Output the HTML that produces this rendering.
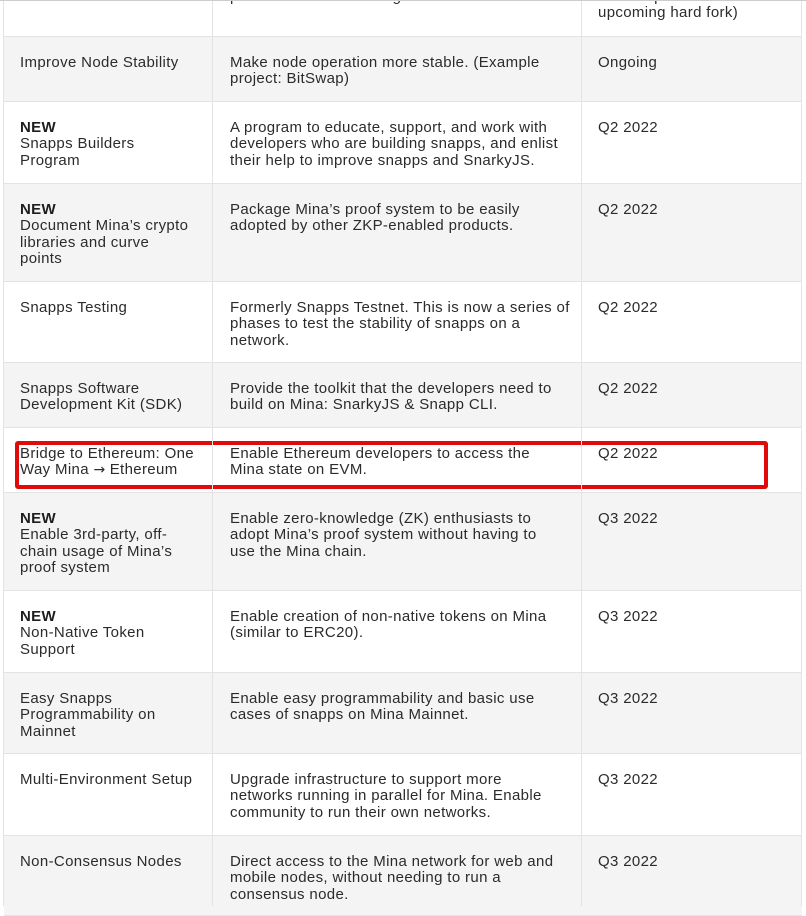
<!DOCTYPE html>
<html><head><meta charset="utf-8"><style>
body{margin:0;width:806px;height:906px;overflow:hidden;background:#fff;font-family:"Liberation Sans",Arial,sans-serif;font-size:15px;letter-spacing:0.35px;line-height:16.3px;color:#2b2b2b;position:relative}
.r{position:absolute;left:4px;width:798px;border-bottom:1px solid #e3e3e3;box-sizing:border-box}
.g{background:#f4f4f4}
.c{position:absolute;top:18px;white-space:nowrap}
.c1{left:16px}.c2{left:226px}.c3{left:594px}
.vl{position:absolute;top:0;bottom:0;width:1px;background:#e3e3e3}
b{font-weight:bold;color:#1e1e1e}
.ar{font-family:"DejaVu Sans",sans-serif;font-size:14px;letter-spacing:0}
.box{position:absolute;left:15px;top:441px;width:753px;height:48px;border:4px solid #e00a0a;border-radius:3px;box-sizing:border-box}
</style></head><body>
<div class="vl" style="left:3px;z-index:2"></div>
<div class="vl" style="left:212px;z-index:2"></div>
<div class="vl" style="left:581px;z-index:2"></div>
<div class="vl" style="left:801px;z-index:2"></div>
<div style="position:absolute;left:0;top:0;width:806px;height:1px;background:#ccc;z-index:3"></div>

<div class="r" style="top:0;height:37px"><div class="c c1" style="top:-11px">Kimchi SNARK</div><div class="c c2" style="top:-11px">prover time than the original PLONK SNARK</div><div class="c c3" style="top:-11px">be incorporated in an<br>upcoming hard fork)</div></div>
<div class="r g" style="top:37px;height:65px"><div class="c c1">Improve Node Stability</div><div class="c c2">Make node operation more stable. (Example<br>project: BitSwap)</div><div class="c c3">Ongoing</div></div>
<div class="r" style="top:102px;height:82px"><div class="c c1"><b>NEW</b><br>Snapps Builders<br>Program</div><div class="c c2">A program to educate, support, and work with<br>developers who are building snapps, and enlist<br>their help to improve snapps and SnarkyJS.</div><div class="c c3">Q2 2022</div></div>
<div class="r g" style="top:184px;height:98px"><div class="c c1"><b>NEW</b><br>Document Mina’s crypto<br>libraries and curve<br>points</div><div class="c c2">Package Mina’s proof system to be easily<br>adopted by other ZKP-enabled products.</div><div class="c c3">Q2 2022</div></div>
<div class="r" style="top:282px;height:81px"><div class="c c1">Snapps Testing</div><div class="c c2">Formerly Snapps Testnet. This is now a series of<br>phases to test the stability of snapps on a<br>network.</div><div class="c c3">Q2 2022</div></div>
<div class="r g" style="top:363px;height:65px"><div class="c c1">Snapps Software<br>Development Kit (SDK)</div><div class="c c2">Provide the toolkit that the developers need to<br>build on Mina: SnarkyJS &amp; Snapp CLI.</div><div class="c c3">Q2 2022</div></div>
<div class="r" style="top:428px;height:65px"><div class="c c1">Bridge to Ethereum: One<br>Way Mina <span class="ar">→</span> Ethereum</div><div class="c c2">Enable Ethereum developers to access the<br>Mina state on EVM.</div><div class="c c3">Q2 2022</div></div>
<div class="r g" style="top:493px;height:98px"><div class="c c1"><b>NEW</b><br>Enable 3rd-party, off-<br>chain usage of Mina’s<br>proof system</div><div class="c c2">Enable zero-knowledge (ZK) enthusiasts to<br>adopt Mina’s proof system without having to<br>use the Mina chain.</div><div class="c c3">Q3 2022</div></div>
<div class="r" style="top:591px;height:82px"><div class="c c1"><b>NEW</b><br>Non-Native Token<br>Support</div><div class="c c2">Enable creation of non-native tokens on Mina<br>(similar to ERC20).</div><div class="c c3">Q3 2022</div></div>
<div class="r g" style="top:673px;height:81px"><div class="c c1">Easy Snapps<br>Programmability on<br>Mainnet</div><div class="c c2">Enable easy programmability and basic use<br>cases of snapps on Mina Mainnet.</div><div class="c c3">Q3 2022</div></div>
<div class="r" style="top:754px;height:82px"><div class="c c1">Multi-Environment Setup</div><div class="c c2">Upgrade infrastructure to support more<br>networks running in parallel for Mina. Enable<br>community to run their own networks.</div><div class="c c3">Q3 2022</div></div>
<div class="r g" style="top:836px;height:80px"><div class="c c1">Non-Consensus Nodes</div><div class="c c2">Direct access to the Mina network for web and<br>mobile nodes, without needing to run a<br>consensus node.</div><div class="c c3">Q3 2022</div></div>
<div class="box"></div>
</body></html>
